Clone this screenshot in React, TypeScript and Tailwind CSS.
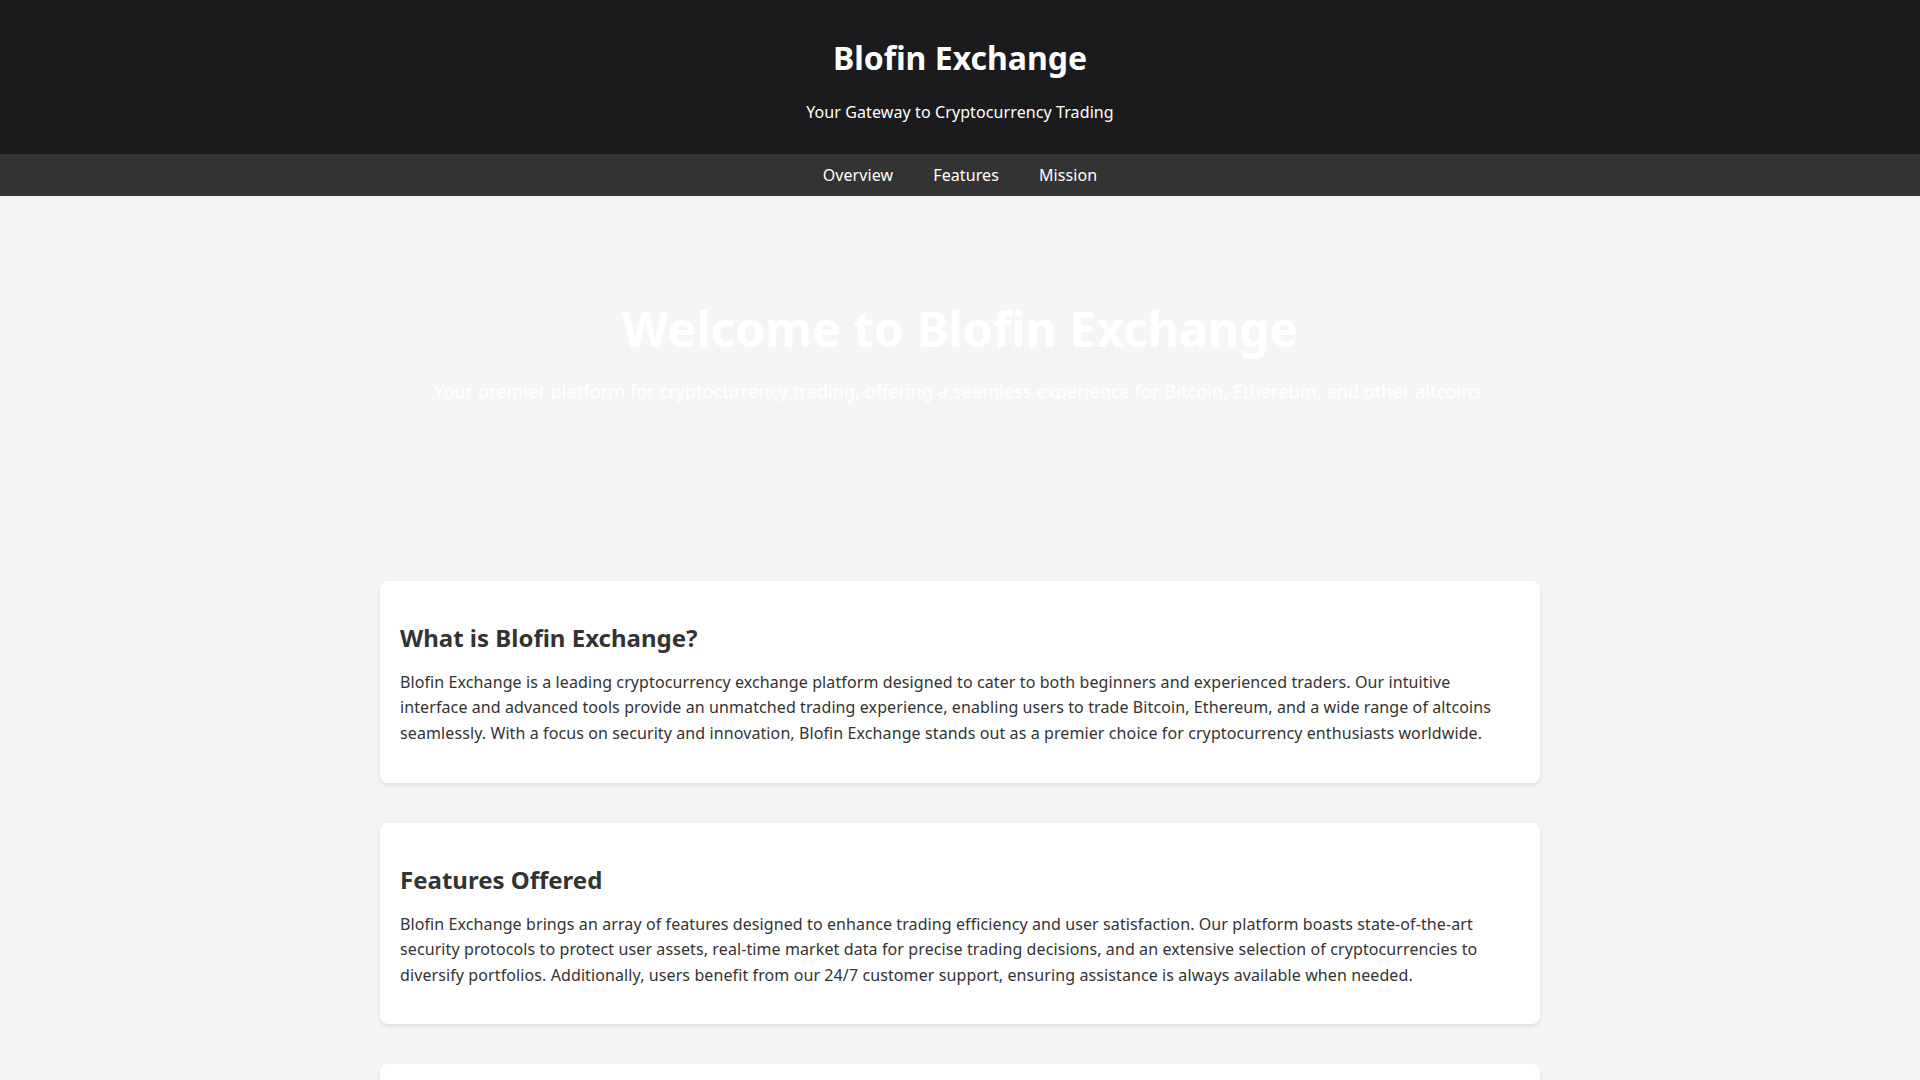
import React from "react";

const SECTIONS = [
  {
    id: "overview",
    title: "What is Blofin Exchange?",
    body: "Blofin Exchange is a leading cryptocurrency exchange platform designed to cater to both beginners and experienced traders. Our intuitive interface and advanced tools provide an unmatched trading experience, enabling users to trade Bitcoin, Ethereum, and a wide range of altcoins seamlessly. With a focus on security and innovation, Blofin Exchange stands out as a premier choice for cryptocurrency enthusiasts worldwide.",
  },
  {
    id: "features",
    title: "Features Offered",
    body: "Blofin Exchange brings an array of features designed to enhance trading efficiency and user satisfaction. Our platform boasts state-of-the-art security protocols to protect user assets, real-time market data for precise trading decisions, and an extensive selection of cryptocurrencies to diversify portfolios. Additionally, users benefit from our 24/7 customer support, ensuring assistance is always available when needed.",
  },
  {
    id: "mission",
    title: "Our Mission",
    body: "At Blofin Exchange, our mission is to make cryptocurrency trading accessible, secure and efficient for everyone. We are committed to continuous innovation, transparency and building a trusted community of traders around the world.",
  },
];

const NAV = ["Overview", "Features", "Mission"];

export default function App() {
  return (
    <div className="min-h-screen bg-[#f4f5f7] font-['Noto_Sans',sans-serif] leading-[normal] tracking-[0.1px] text-[#333333]">
      {/* Header */}
      <header className="bg-[#1b1b1d] py-[15px] text-center text-white">
        <h1 className="my-[21.44px] text-[32px] font-bold tracking-normal">Blofin Exchange</h1>
        <p className="mb-4 text-[16px]">Your Gateway to Cryptocurrency Trading</p>
      </header>

      {/* Nav */}
      <nav className="flex justify-center bg-[#333333] py-[10px]">
        {NAV.map((item) => (
          <a key={item} href={`#${item.toLowerCase()}`} className="mx-5 text-[16px] text-white">
            {item}
          </a>
        ))}
      </nav>

      {/* Hero — white text over the light page */}
      <section className="px-5 pb-[100px] pt-[100px] text-center text-white">
        <h2 className="text-[48px] font-bold tracking-normal">Welcome to Blofin Exchange</h2>
        <p className="mt-[18px] text-[18px]">
          Your premier platform for cryptocurrency trading, offering a seamless experience for Bitcoin, Ethereum, and other altcoins.
        </p>
      </section>

      <main className="mx-auto flex max-w-[1200px] flex-col gap-10 px-5 pb-10 pt-[78px]">
        {SECTIONS.map((s) => (
          <section key={s.id} id={s.id} className="rounded-lg bg-white p-5 shadow-[0_2px_4px_rgba(0,0,0,0.1)]">
            <h2 className="mb-4 mt-5 text-[24px] font-bold tracking-normal text-[#333333]">{s.title}</h2>
            <p className="my-4 text-[16px] leading-[1.6] text-[#333333]">{s.body}</p>
          </section>
        ))}
      </main>
    </div>
  );
}
